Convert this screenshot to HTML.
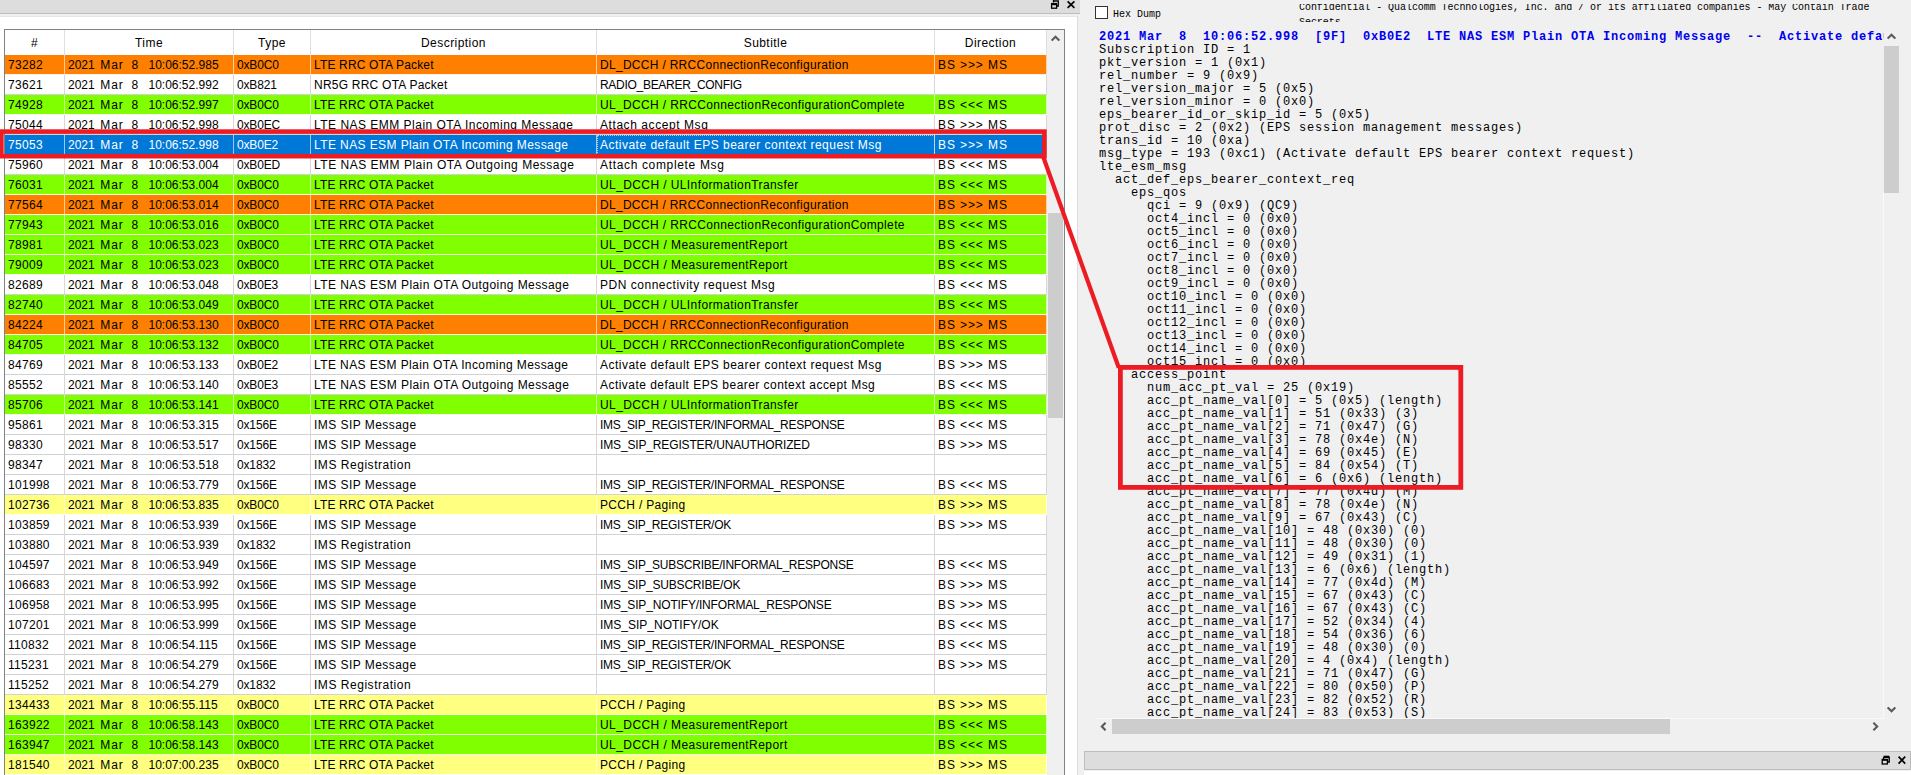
<!DOCTYPE html>
<html><head><meta charset="utf-8"><title>Log View</title>
<style>
html,body{margin:0;padding:0}
body{width:1911px;height:775px;overflow:hidden;background:#f0f0f0;position:relative;font-family:"Liberation Sans",sans-serif;font-size:12px;color:#000}
div{box-sizing:border-box}
#ltitle{position:absolute;left:0;top:0;width:1080px;height:14px;background:#dddddd;border-bottom:1px solid #bdbdbd}
#lwhite{position:absolute;left:0;top:16px;width:1078px;height:759px;background:#fff;border-right:1px solid #dcdcdc;border-top:1px solid #e6e6e6}
#tbl{position:absolute;left:4px;top:29px;width:1061px;height:760px;border:1px solid #7e828a;background:#fff;overflow:hidden}
/* inside #tbl coordinates are page - 5 (x) and page - 30 (y) */
#hdr{position:absolute;left:0;top:0;width:1042px;height:25px;background:#fff}
#hdr .h{position:absolute;top:0;height:25px;line-height:27px;text-align:center;border-right:1px solid #e0dee0;letter-spacing:.45px}
.h1,.c1{left:0;width:60px}
.h2,.c2{left:60px;width:169px}
.h3,.c3{left:229px;width:77px}
.h4,.c4{left:306px;width:286px}
.h5,.c5{left:592px;width:338px}
.h6,.c6{left:930px;width:112px}
.r{position:absolute;left:0;width:1042px;height:20px}
.c{position:absolute;top:0;height:20px;line-height:19px;padding-top:1px;padding-left:3px;white-space:pre;overflow:hidden;border-right:1px solid #d9d6d9;border-bottom:1px solid #d2d2d2;background-clip:padding-box}
.c span{display:inline-block}
.t1{width:32.3px}.t2{width:31.3px;letter-spacing:.9px}.t3{width:16.9px}
.c1{letter-spacing:.3px}.c3{letter-spacing:-.15px}
.o{background:#ff8000}.g{background:#80ff00}.y{background:#ffff80}.s{background:#0078d7;color:#fff}
.o .c,.g .c,.y .c,.s .c{border-right-color:rgba(255,255,255,.62);border-bottom-color:rgba(255,255,255,.9)}
.s .c5{outline:1px dotted rgba(255,235,200,.75);outline-offset:-1px}
#vsb{position:absolute;left:1042px;top:0;width:17px;height:760px;background:#f0f0f0}
#vsb .th{position:absolute;left:1px;top:183px;width:15px;height:205px;background:#cdcdcd}
.arr{position:absolute}
#chk{position:absolute;left:1095px;top:6px;width:13px;height:13px;border:1px solid #333;background:#fff}
.ui{position:absolute;font-family:"Liberation Mono",monospace;font-size:10px;line-height:12px;white-space:pre;transform-origin:0 0;transform:scale(1,1.12);color:#000}
#conf{position:absolute;left:1290px;top:4px;width:600px;height:18px;overflow:hidden}
#mono{position:absolute;left:1099px;top:31px;width:785px;height:687px;overflow:hidden;font-family:"Liberation Mono",monospace;font-size:12px;letter-spacing:.8px;line-height:13px;color:#000}
#mono .l{height:13px;white-space:pre}
#mono .b{color:#0000ee;font-weight:bold}
.sbt{position:absolute;background:#cdcdcd}
#btitle{position:absolute;left:1084px;top:751px;width:827px;height:19px;background:#dddddd;border:1px solid #bdbdbd}
#bwhite{position:absolute;left:1084px;top:771px;width:827px;height:4px;background:#fff}
#ann{position:absolute;left:0;top:0}
</style></head><body>
<div id="ltitle"></div>
<div id="lwhite"></div>
<div id="tbl">
<div id="hdr"><div class="h h1">#</div><div class="h h2">Time</div><div class="h h3">Type</div><div class="h h4">Description</div><div class="h h5">Subtitle</div><div class="h h6">Direction</div></div>
<div id="rows" style="position:absolute;left:0;top:25px">
<div class="r o" style="top:0px"><div class="c c1">73282</div><div class="c c2"><span class="t1">2021 </span><span class="t2">Mar  </span><span class="t3">8  </span><span>10:06:52.985</span></div><div class="c c3">0xB0C0</div><div class="c c4" style="letter-spacing:0.152px">LTE RRC OTA Packet</div><div class="c c5" style="letter-spacing:0.296px">DL_DCCH / RRCConnectionReconfiguration</div><div class="c c6" style="letter-spacing:0.900px">BS &gt;&gt;&gt; MS</div></div>
<div class="r w" style="top:20px"><div class="c c1">73621</div><div class="c c2"><span class="t1">2021 </span><span class="t2">Mar  </span><span class="t3">8  </span><span>10:06:52.992</span></div><div class="c c3">0xB821</div><div class="c c4" style="letter-spacing:0.231px">NR5G RRC OTA Packet</div><div class="c c5" style="letter-spacing:-0.293px">RADIO_BEARER_CONFIG</div><div class="c c6"></div></div>
<div class="r g" style="top:40px"><div class="c c1">74928</div><div class="c c2"><span class="t1">2021 </span><span class="t2">Mar  </span><span class="t3">8  </span><span>10:06:52.997</span></div><div class="c c3">0xB0C0</div><div class="c c4" style="letter-spacing:0.152px">LTE RRC OTA Packet</div><div class="c c5" style="letter-spacing:0.349px">UL_DCCH / RRCConnectionReconfigurationComplete</div><div class="c c6" style="letter-spacing:0.900px">BS &lt;&lt;&lt; MS</div></div>
<div class="r w" style="top:60px"><div class="c c1">75044</div><div class="c c2"><span class="t1">2021 </span><span class="t2">Mar  </span><span class="t3">8  </span><span>10:06:52.998</span></div><div class="c c3">0xB0EC</div><div class="c c4" style="letter-spacing:0.484px">LTE NAS EMM Plain OTA Incoming Message</div><div class="c c5" style="letter-spacing:0.568px">Attach accept Msg</div><div class="c c6" style="letter-spacing:0.900px">BS &gt;&gt;&gt; MS</div></div>
<div class="r s" style="top:80px"><div class="c c1">75053</div><div class="c c2"><span class="t1">2021 </span><span class="t2">Mar  </span><span class="t3">8  </span><span>10:06:52.998</span></div><div class="c c3">0xB0E2</div><div class="c c4" style="letter-spacing:0.403px">LTE NAS ESM Plain OTA Incoming Message</div><div class="c c5" style="letter-spacing:0.491px">Activate default EPS bearer context request Msg</div><div class="c c6" style="letter-spacing:0.900px">BS &gt;&gt;&gt; MS</div></div>
<div class="r w" style="top:100px"><div class="c c1">75960</div><div class="c c2"><span class="t1">2021 </span><span class="t2">Mar  </span><span class="t3">8  </span><span>10:06:53.004</span></div><div class="c c3">0xB0ED</div><div class="c c4" style="letter-spacing:0.511px">LTE NAS EMM Plain OTA Outgoing Message</div><div class="c c5" style="letter-spacing:0.658px">Attach complete Msg</div><div class="c c6" style="letter-spacing:0.900px">BS &lt;&lt;&lt; MS</div></div>
<div class="r g" style="top:120px"><div class="c c1">76031</div><div class="c c2"><span class="t1">2021 </span><span class="t2">Mar  </span><span class="t3">8  </span><span>10:06:53.004</span></div><div class="c c3">0xB0C0</div><div class="c c4" style="letter-spacing:0.152px">LTE RRC OTA Packet</div><div class="c c5" style="letter-spacing:0.401px">UL_DCCH / ULInformationTransfer</div><div class="c c6" style="letter-spacing:0.900px">BS &lt;&lt;&lt; MS</div></div>
<div class="r o" style="top:140px"><div class="c c1">77564</div><div class="c c2"><span class="t1">2021 </span><span class="t2">Mar  </span><span class="t3">8  </span><span>10:06:53.014</span></div><div class="c c3">0xB0C0</div><div class="c c4" style="letter-spacing:0.152px">LTE RRC OTA Packet</div><div class="c c5" style="letter-spacing:0.296px">DL_DCCH / RRCConnectionReconfiguration</div><div class="c c6" style="letter-spacing:0.900px">BS &gt;&gt;&gt; MS</div></div>
<div class="r g" style="top:160px"><div class="c c1">77943</div><div class="c c2"><span class="t1">2021 </span><span class="t2">Mar  </span><span class="t3">8  </span><span>10:06:53.016</span></div><div class="c c3">0xB0C0</div><div class="c c4" style="letter-spacing:0.152px">LTE RRC OTA Packet</div><div class="c c5" style="letter-spacing:0.349px">UL_DCCH / RRCConnectionReconfigurationComplete</div><div class="c c6" style="letter-spacing:0.900px">BS &lt;&lt;&lt; MS</div></div>
<div class="r g" style="top:180px"><div class="c c1">78981</div><div class="c c2"><span class="t1">2021 </span><span class="t2">Mar  </span><span class="t3">8  </span><span>10:06:53.023</span></div><div class="c c3">0xB0C0</div><div class="c c4" style="letter-spacing:0.152px">LTE RRC OTA Packet</div><div class="c c5" style="letter-spacing:0.432px">UL_DCCH / MeasurementReport</div><div class="c c6" style="letter-spacing:0.900px">BS &lt;&lt;&lt; MS</div></div>
<div class="r g" style="top:200px"><div class="c c1">79009</div><div class="c c2"><span class="t1">2021 </span><span class="t2">Mar  </span><span class="t3">8  </span><span>10:06:53.023</span></div><div class="c c3">0xB0C0</div><div class="c c4" style="letter-spacing:0.152px">LTE RRC OTA Packet</div><div class="c c5" style="letter-spacing:0.432px">UL_DCCH / MeasurementReport</div><div class="c c6" style="letter-spacing:0.900px">BS &lt;&lt;&lt; MS</div></div>
<div class="r w" style="top:220px"><div class="c c1">82689</div><div class="c c2"><span class="t1">2021 </span><span class="t2">Mar  </span><span class="t3">8  </span><span>10:06:53.048</span></div><div class="c c3">0xB0E3</div><div class="c c4" style="letter-spacing:0.430px">LTE NAS ESM Plain OTA Outgoing Message</div><div class="c c5" style="letter-spacing:0.521px">PDN connectivity request Msg</div><div class="c c6" style="letter-spacing:0.900px">BS &lt;&lt;&lt; MS</div></div>
<div class="r g" style="top:240px"><div class="c c1">82740</div><div class="c c2"><span class="t1">2021 </span><span class="t2">Mar  </span><span class="t3">8  </span><span>10:06:53.049</span></div><div class="c c3">0xB0C0</div><div class="c c4" style="letter-spacing:0.152px">LTE RRC OTA Packet</div><div class="c c5" style="letter-spacing:0.401px">UL_DCCH / ULInformationTransfer</div><div class="c c6" style="letter-spacing:0.900px">BS &lt;&lt;&lt; MS</div></div>
<div class="r o" style="top:260px"><div class="c c1">84224</div><div class="c c2"><span class="t1">2021 </span><span class="t2">Mar  </span><span class="t3">8  </span><span>10:06:53.130</span></div><div class="c c3">0xB0C0</div><div class="c c4" style="letter-spacing:0.152px">LTE RRC OTA Packet</div><div class="c c5" style="letter-spacing:0.296px">DL_DCCH / RRCConnectionReconfiguration</div><div class="c c6" style="letter-spacing:0.900px">BS &gt;&gt;&gt; MS</div></div>
<div class="r g" style="top:280px"><div class="c c1">84705</div><div class="c c2"><span class="t1">2021 </span><span class="t2">Mar  </span><span class="t3">8  </span><span>10:06:53.132</span></div><div class="c c3">0xB0C0</div><div class="c c4" style="letter-spacing:0.152px">LTE RRC OTA Packet</div><div class="c c5" style="letter-spacing:0.349px">UL_DCCH / RRCConnectionReconfigurationComplete</div><div class="c c6" style="letter-spacing:0.900px">BS &lt;&lt;&lt; MS</div></div>
<div class="r w" style="top:300px"><div class="c c1">84769</div><div class="c c2"><span class="t1">2021 </span><span class="t2">Mar  </span><span class="t3">8  </span><span>10:06:53.133</span></div><div class="c c3">0xB0E2</div><div class="c c4" style="letter-spacing:0.403px">LTE NAS ESM Plain OTA Incoming Message</div><div class="c c5" style="letter-spacing:0.491px">Activate default EPS bearer context request Msg</div><div class="c c6" style="letter-spacing:0.900px">BS &gt;&gt;&gt; MS</div></div>
<div class="r w" style="top:320px"><div class="c c1">85552</div><div class="c c2"><span class="t1">2021 </span><span class="t2">Mar  </span><span class="t3">8  </span><span>10:06:53.140</span></div><div class="c c3">0xB0E3</div><div class="c c4" style="letter-spacing:0.430px">LTE NAS ESM Plain OTA Outgoing Message</div><div class="c c5" style="letter-spacing:0.459px">Activate default EPS bearer context accept Msg</div><div class="c c6" style="letter-spacing:0.900px">BS &lt;&lt;&lt; MS</div></div>
<div class="r g" style="top:340px"><div class="c c1">85706</div><div class="c c2"><span class="t1">2021 </span><span class="t2">Mar  </span><span class="t3">8  </span><span>10:06:53.141</span></div><div class="c c3">0xB0C0</div><div class="c c4" style="letter-spacing:0.152px">LTE RRC OTA Packet</div><div class="c c5" style="letter-spacing:0.401px">UL_DCCH / ULInformationTransfer</div><div class="c c6" style="letter-spacing:0.900px">BS &lt;&lt;&lt; MS</div></div>
<div class="r w" style="top:360px"><div class="c c1">95861</div><div class="c c2"><span class="t1">2021 </span><span class="t2">Mar  </span><span class="t3">8  </span><span>10:06:53.315</span></div><div class="c c3">0x156E</div><div class="c c4" style="letter-spacing:0.448px">IMS SIP Message</div><div class="c c5" style="letter-spacing:-0.281px">IMS_SIP_REGISTER/INFORMAL_RESPONSE</div><div class="c c6" style="letter-spacing:0.900px">BS &lt;&lt;&lt; MS</div></div>
<div class="r w" style="top:380px"><div class="c c1">98330</div><div class="c c2"><span class="t1">2021 </span><span class="t2">Mar  </span><span class="t3">8  </span><span>10:06:53.517</span></div><div class="c c3">0x156E</div><div class="c c4" style="letter-spacing:0.448px">IMS SIP Message</div><div class="c c5" style="letter-spacing:-0.148px">IMS_SIP_REGISTER/UNAUTHORIZED</div><div class="c c6" style="letter-spacing:0.900px">BS &gt;&gt;&gt; MS</div></div>
<div class="r w" style="top:400px"><div class="c c1">98347</div><div class="c c2"><span class="t1">2021 </span><span class="t2">Mar  </span><span class="t3">8  </span><span>10:06:53.518</span></div><div class="c c3">0x1832</div><div class="c c4" style="letter-spacing:0.533px">IMS Registration</div><div class="c c5"></div><div class="c c6"></div></div>
<div class="r w" style="top:420px"><div class="c c1">101998</div><div class="c c2"><span class="t1">2021 </span><span class="t2">Mar  </span><span class="t3">8  </span><span>10:06:53.779</span></div><div class="c c3">0x156E</div><div class="c c4" style="letter-spacing:0.448px">IMS SIP Message</div><div class="c c5" style="letter-spacing:-0.281px">IMS_SIP_REGISTER/INFORMAL_RESPONSE</div><div class="c c6" style="letter-spacing:0.900px">BS &lt;&lt;&lt; MS</div></div>
<div class="r y" style="top:440px"><div class="c c1">102736</div><div class="c c2"><span class="t1">2021 </span><span class="t2">Mar  </span><span class="t3">8  </span><span>10:06:53.835</span></div><div class="c c3">0xB0C0</div><div class="c c4" style="letter-spacing:0.152px">LTE RRC OTA Packet</div><div class="c c5" style="letter-spacing:0.319px">PCCH / Paging</div><div class="c c6" style="letter-spacing:0.900px">BS &gt;&gt;&gt; MS</div></div>
<div class="r w" style="top:460px"><div class="c c1">103859</div><div class="c c2"><span class="t1">2021 </span><span class="t2">Mar  </span><span class="t3">8  </span><span>10:06:53.939</span></div><div class="c c3">0x156E</div><div class="c c4" style="letter-spacing:0.448px">IMS SIP Message</div><div class="c c5" style="letter-spacing:-0.269px">IMS_SIP_REGISTER/OK</div><div class="c c6" style="letter-spacing:0.900px">BS &gt;&gt;&gt; MS</div></div>
<div class="r w" style="top:480px"><div class="c c1">103880</div><div class="c c2"><span class="t1">2021 </span><span class="t2">Mar  </span><span class="t3">8  </span><span>10:06:53.939</span></div><div class="c c3">0x1832</div><div class="c c4" style="letter-spacing:0.533px">IMS Registration</div><div class="c c5"></div><div class="c c6"></div></div>
<div class="r w" style="top:500px"><div class="c c1">104597</div><div class="c c2"><span class="t1">2021 </span><span class="t2">Mar  </span><span class="t3">8  </span><span>10:06:53.949</span></div><div class="c c3">0x156E</div><div class="c c4" style="letter-spacing:0.448px">IMS SIP Message</div><div class="c c5" style="letter-spacing:-0.243px">IMS_SIP_SUBSCRIBE/INFORMAL_RESPONSE</div><div class="c c6" style="letter-spacing:0.900px">BS &lt;&lt;&lt; MS</div></div>
<div class="r w" style="top:520px"><div class="c c1">106683</div><div class="c c2"><span class="t1">2021 </span><span class="t2">Mar  </span><span class="t3">8  </span><span>10:06:53.992</span></div><div class="c c3">0x156E</div><div class="c c4" style="letter-spacing:0.448px">IMS SIP Message</div><div class="c c5" style="letter-spacing:-0.192px">IMS_SIP_SUBSCRIBE/OK</div><div class="c c6" style="letter-spacing:0.900px">BS &gt;&gt;&gt; MS</div></div>
<div class="r w" style="top:540px"><div class="c c1">106958</div><div class="c c2"><span class="t1">2021 </span><span class="t2">Mar  </span><span class="t3">8  </span><span>10:06:53.995</span></div><div class="c c3">0x156E</div><div class="c c4" style="letter-spacing:0.448px">IMS SIP Message</div><div class="c c5" style="letter-spacing:-0.162px">IMS_SIP_NOTIFY/INFORMAL_RESPONSE</div><div class="c c6" style="letter-spacing:0.900px">BS &gt;&gt;&gt; MS</div></div>
<div class="r w" style="top:560px"><div class="c c1">107201</div><div class="c c2"><span class="t1">2021 </span><span class="t2">Mar  </span><span class="t3">8  </span><span>10:06:53.999</span></div><div class="c c3">0x156E</div><div class="c c4" style="letter-spacing:0.448px">IMS SIP Message</div><div class="c c5" style="letter-spacing:-0.000px">IMS_SIP_NOTIFY/OK</div><div class="c c6" style="letter-spacing:0.900px">BS &lt;&lt;&lt; MS</div></div>
<div class="r w" style="top:580px"><div class="c c1">110832</div><div class="c c2"><span class="t1">2021 </span><span class="t2">Mar  </span><span class="t3">8  </span><span>10:06:54.115</span></div><div class="c c3">0x156E</div><div class="c c4" style="letter-spacing:0.448px">IMS SIP Message</div><div class="c c5" style="letter-spacing:-0.281px">IMS_SIP_REGISTER/INFORMAL_RESPONSE</div><div class="c c6" style="letter-spacing:0.900px">BS &lt;&lt;&lt; MS</div></div>
<div class="r w" style="top:600px"><div class="c c1">115231</div><div class="c c2"><span class="t1">2021 </span><span class="t2">Mar  </span><span class="t3">8  </span><span>10:06:54.279</span></div><div class="c c3">0x156E</div><div class="c c4" style="letter-spacing:0.448px">IMS SIP Message</div><div class="c c5" style="letter-spacing:-0.269px">IMS_SIP_REGISTER/OK</div><div class="c c6" style="letter-spacing:0.900px">BS &gt;&gt;&gt; MS</div></div>
<div class="r w" style="top:620px"><div class="c c1">115252</div><div class="c c2"><span class="t1">2021 </span><span class="t2">Mar  </span><span class="t3">8  </span><span>10:06:54.279</span></div><div class="c c3">0x1832</div><div class="c c4" style="letter-spacing:0.533px">IMS Registration</div><div class="c c5"></div><div class="c c6"></div></div>
<div class="r y" style="top:640px"><div class="c c1">134433</div><div class="c c2"><span class="t1">2021 </span><span class="t2">Mar  </span><span class="t3">8  </span><span>10:06:55.115</span></div><div class="c c3">0xB0C0</div><div class="c c4" style="letter-spacing:0.152px">LTE RRC OTA Packet</div><div class="c c5" style="letter-spacing:0.319px">PCCH / Paging</div><div class="c c6" style="letter-spacing:0.900px">BS &gt;&gt;&gt; MS</div></div>
<div class="r g" style="top:660px"><div class="c c1">163922</div><div class="c c2"><span class="t1">2021 </span><span class="t2">Mar  </span><span class="t3">8  </span><span>10:06:58.143</span></div><div class="c c3">0xB0C0</div><div class="c c4" style="letter-spacing:0.152px">LTE RRC OTA Packet</div><div class="c c5" style="letter-spacing:0.432px">UL_DCCH / MeasurementReport</div><div class="c c6" style="letter-spacing:0.900px">BS &lt;&lt;&lt; MS</div></div>
<div class="r g" style="top:680px"><div class="c c1">163947</div><div class="c c2"><span class="t1">2021 </span><span class="t2">Mar  </span><span class="t3">8  </span><span>10:06:58.143</span></div><div class="c c3">0xB0C0</div><div class="c c4" style="letter-spacing:0.152px">LTE RRC OTA Packet</div><div class="c c5" style="letter-spacing:0.432px">UL_DCCH / MeasurementReport</div><div class="c c6" style="letter-spacing:0.900px">BS &lt;&lt;&lt; MS</div></div>
<div class="r y" style="top:700px"><div class="c c1">181540</div><div class="c c2"><span class="t1">2021 </span><span class="t2">Mar  </span><span class="t3">8  </span><span>10:07:00.235</span></div><div class="c c3">0xB0C0</div><div class="c c4" style="letter-spacing:0.152px">LTE RRC OTA Packet</div><div class="c c5" style="letter-spacing:0.319px">PCCH / Paging</div><div class="c c6" style="letter-spacing:0.900px">BS &gt;&gt;&gt; MS</div></div>
</div>
<div id="vsb"><div class="th"></div>
<svg class="arr" style="left:4px;top:5px" width="9" height="7" viewBox="0 0 9 7"><path d="M0.7 5.6 L4.5 1.8 L8.3 5.6" fill="none" stroke="#5a5a5a" stroke-width="2.1"/></svg>
</div>
</div>
<svg class="arr" style="left:1049px;top:0" width="28" height="10" viewBox="0 0 28 10"><g fill="none" stroke="#000" stroke-width="1.3"><path d="M4.5 0 V2.5 M4.5 1 H9.3 V6 H7.5" /><rect x="2.6" y="3.6" width="5" height="4.6"/><path d="M2.6 4.4 H7.6" stroke-width="1.6"/><path d="M18.6 1.3 L25.4 7.8 M25.4 1.3 L18.6 7.8" stroke-width="1.7"/></g></svg>
<div id="chk"></div>
<div class="ui" style="left:1113px;top:8px">Hex Dump</div>
<div id="conf"><div class="ui" style="left:9px;top:-3px;line-height:12.5px;letter-spacing:-.06px">Confidential - Qualcomm Technologies, Inc. and / or its affiliated companies - May Contain Trade
Secrets</div></div>
<div id="mono"><div class="l b">2021 Mar  8  10:06:52.998  [9F]  0xB0E2  LTE NAS ESM Plain OTA Incoming Message  --  Activate default EPS bearer context request Msg</div>
<div class="l">Subscription ID = 1</div>
<div class="l">pkt_version = 1 (0x1)</div>
<div class="l">rel_number = 9 (0x9)</div>
<div class="l">rel_version_major = 5 (0x5)</div>
<div class="l">rel_version_minor = 0 (0x0)</div>
<div class="l">eps_bearer_id_or_skip_id = 5 (0x5)</div>
<div class="l">prot_disc = 2 (0x2) (EPS session management messages)</div>
<div class="l">trans_id = 10 (0xa)</div>
<div class="l">msg_type = 193 (0xc1) (Activate default EPS bearer context request)</div>
<div class="l">lte_esm_msg</div>
<div class="l">  act_def_eps_bearer_context_req</div>
<div class="l">    eps_qos</div>
<div class="l">      qci = 9 (0x9) (QC9)</div>
<div class="l">      oct4_incl = 0 (0x0)</div>
<div class="l">      oct5_incl = 0 (0x0)</div>
<div class="l">      oct6_incl = 0 (0x0)</div>
<div class="l">      oct7_incl = 0 (0x0)</div>
<div class="l">      oct8_incl = 0 (0x0)</div>
<div class="l">      oct9_incl = 0 (0x0)</div>
<div class="l">      oct10_incl = 0 (0x0)</div>
<div class="l">      oct11_incl = 0 (0x0)</div>
<div class="l">      oct12_incl = 0 (0x0)</div>
<div class="l">      oct13_incl = 0 (0x0)</div>
<div class="l">      oct14_incl = 0 (0x0)</div>
<div class="l">      oct15_incl = 0 (0x0)</div>
<div class="l">    access_point</div>
<div class="l">      num_acc_pt_val = 25 (0x19)</div>
<div class="l">      acc_pt_name_val[0] = 5 (0x5) (length)</div>
<div class="l">      acc_pt_name_val[1] = 51 (0x33) (3)</div>
<div class="l">      acc_pt_name_val[2] = 71 (0x47) (G)</div>
<div class="l">      acc_pt_name_val[3] = 78 (0x4e) (N)</div>
<div class="l">      acc_pt_name_val[4] = 69 (0x45) (E)</div>
<div class="l">      acc_pt_name_val[5] = 84 (0x54) (T)</div>
<div class="l">      acc_pt_name_val[6] = 6 (0x6) (length)</div>
<div class="l">      acc_pt_name_val[7] = 77 (0x4d) (M)</div>
<div class="l">      acc_pt_name_val[8] = 78 (0x4e) (N)</div>
<div class="l">      acc_pt_name_val[9] = 67 (0x43) (C)</div>
<div class="l">      acc_pt_name_val[10] = 48 (0x30) (0)</div>
<div class="l">      acc_pt_name_val[11] = 48 (0x30) (0)</div>
<div class="l">      acc_pt_name_val[12] = 49 (0x31) (1)</div>
<div class="l">      acc_pt_name_val[13] = 6 (0x6) (length)</div>
<div class="l">      acc_pt_name_val[14] = 77 (0x4d) (M)</div>
<div class="l">      acc_pt_name_val[15] = 67 (0x43) (C)</div>
<div class="l">      acc_pt_name_val[16] = 67 (0x43) (C)</div>
<div class="l">      acc_pt_name_val[17] = 52 (0x34) (4)</div>
<div class="l">      acc_pt_name_val[18] = 54 (0x36) (6)</div>
<div class="l">      acc_pt_name_val[19] = 48 (0x30) (0)</div>
<div class="l">      acc_pt_name_val[20] = 4 (0x4) (length)</div>
<div class="l">      acc_pt_name_val[21] = 71 (0x47) (G)</div>
<div class="l">      acc_pt_name_val[22] = 80 (0x50) (P)</div>
<div class="l">      acc_pt_name_val[23] = 82 (0x52) (R)</div>
<div class="l">      acc_pt_name_val[24] = 83 (0x53) (S)</div>
</div>
<div class="sbt" style="left:1884px;top:46px;width:15px;height:147px"></div>
<div class="sbt" style="left:1112px;top:719px;width:558px;height:15px"></div>
<svg class="arr" style="left:1887px;top:33px" width="9" height="7" viewBox="0 0 9 7"><path d="M0.7 5.6 L4.5 1.8 L8.3 5.6" fill="none" stroke="#5a5a5a" stroke-width="2.1"/></svg>
<svg class="arr" style="left:1887px;top:706px" width="9" height="7" viewBox="0 0 9 7"><path d="M0.7 1.4 L4.5 5.2 L8.3 1.4" fill="none" stroke="#5a5a5a" stroke-width="2.1"/></svg>
<svg class="arr" style="left:1100px;top:722px" width="7" height="9" viewBox="0 0 7 9"><path d="M5.6 0.7 L1.8 4.5 L5.6 8.3" fill="none" stroke="#5a5a5a" stroke-width="2.1"/></svg>
<svg class="arr" style="left:1872px;top:722px" width="7" height="9" viewBox="0 0 7 9"><path d="M1.4 0.7 L5.2 4.5 L1.4 8.3" fill="none" stroke="#5a5a5a" stroke-width="2.1"/></svg>
<div style="position:absolute;left:1096px;top:718px;width:788px;height:1px;background:#fafafa"></div><div style="position:absolute;left:1883px;top:193px;width:1px;height:526px;background:#f9f9f9"></div>
<div id="btitle"></div>
<div id="bwhite"></div>
<svg class="arr" style="left:1880px;top:755px" width="28" height="11" viewBox="0 0 28 11"><g fill="none" stroke="#000" stroke-width="1.3"><path d="M3.6 2.2 H9.2 V7 H7.6 M3.6 2.2 V4" stroke-width="1.4"/><path d="M3.6 1.6 H9.2" stroke-width="1.8"/><rect x="2.2" y="4.4" width="5.2" height="4.6"/><path d="M2.2 4.9 H7.4" stroke-width="1.8"/><path d="M18.6 1.6 L25.2 8.6 M25.2 1.6 L18.6 8.6" stroke-width="1.7"/></g></svg>
<svg id="ann" width="1911" height="775" viewBox="0 0 1911 775"><g fill="none" stroke="#ed1c24" stroke-linejoin="miter"><rect x="1.4" y="131.6" width="1043" height="24.6" stroke-width="4.6"/><path d="M1043.3 157 L1118.8 367.8" stroke-width="4.2"/><rect x="1120.4" y="367.4" width="340.4" height="120" stroke-width="4.8"/></g></svg>
</body></html>
